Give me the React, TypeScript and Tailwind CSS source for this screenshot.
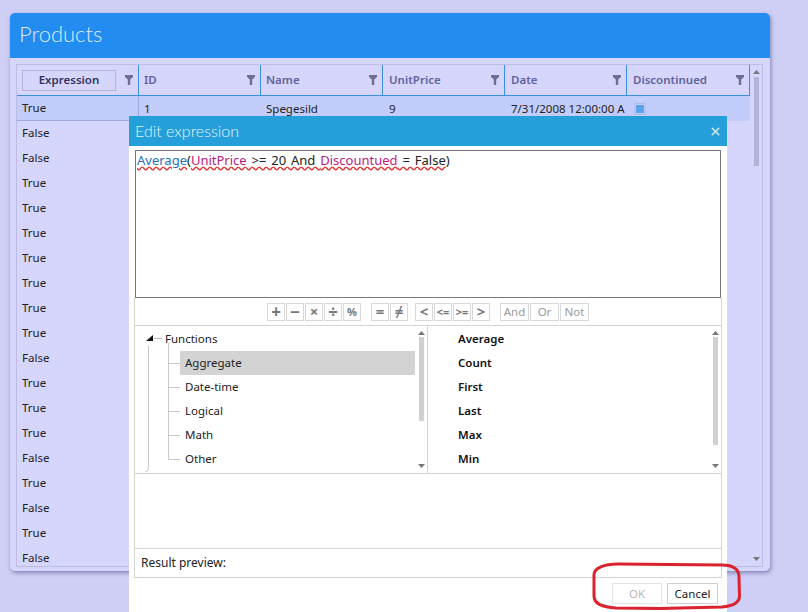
import React from 'react';
import {X} from "lucide-react";

const COLUMNS = ["ID", "Name", "UnitPrice", "Date", "Discontinued"];
const ROWS = ["False", "False", "True", "True", "True", "True", "True", "True", "True", "False", "True", "True", "True", "False", "True", "False", "True", "False"];
const TREE_ITEMS = ["Aggregate", "Date-time", "Logical", "Math", "Other"];
const FUNCTIONS = ["Average", "Count", "First", "Last", "Max", "Min"];

const FilterIcon = () => (
    <svg width="8" height="10" viewBox="0 0 8 10" className="shrink-0" aria-hidden="true">
        <path d="M0 0H8V2L5.2 4.500V10H2.800V4.500L0 2Z" fill="#6d6d95"/>
    </svg>
);

const HeaderCell = ({label, width, inset}: {label: string, width: string, inset: string}) => (
    <div className={`${width} ${inset} h-full flex items-center justify-between pr-[5px] border-r-[1px] border-[#3d8fe4] text-[11.5px] font-semibold text-[#62629c]`}>
        <span>{label}</span>
        <FilterIcon/>
    </div>
);

const Arrow = ({up}: {up?: boolean}) => (
    <svg width="7" height="4" viewBox="0 0 7 4" aria-hidden="true">
        <path d={up ? "M3.500 0L7 4H0Z" : "M0 0H7L3.500 4Z"} fill="#777"/>
    </svg>
);

const Scrollbar = ({thumb, thumbColor}: {thumb: string, thumbColor: string}) => (
    <div className="w-[12px] h-full flex flex-col items-center justify-between py-[5px]">
        <div className="flex flex-col items-center gap-[2px] flex-1 min-h-0">
            <Arrow up/>
            <div className={`w-[5px] ${thumb} ${thumbColor}`}/>
        </div>
        <Arrow/>
    </div>
);

const OpButton = ({children, width = "w-[18px]", text = "text-[15px] font-bold"}: {children: React.ReactNode, width?: string, text?: string}) => (
    <div className={`${width} h-[18px] border border-[#d8d8d8] flex items-center justify-center leading-none text-[#777] ${text}`}>
        {children}
    </div>
);

const App = () => {
    return (
        <div className="relative w-[808px] h-[612px] overflow-hidden bg-[#cfcff6] pl-[10px] pt-[13px] font-['Noto_Sans',sans-serif] text-[11.5px] text-[#222]">
            <div className="w-[760px] h-[558px] flex flex-col rounded-[5px] overflow-hidden bg-[#d6d6fc] shadow-[1px_2px_4px_rgba(70,70,130,0.55)]">
                <div className="h-[45px] shrink-0 bg-[#228cf0] pl-[9px] pb-[3px] flex items-center">
                    <span className="font-['Lato',sans-serif] font-light text-[22px] leading-none text-[#dbeafc]">Products</span>
                </div>

                <div className="ml-[6px] mt-[6px] w-[747px] h-[503px] flex border border-[#bcbce4]">
                    <div className="w-[734px] h-full flex flex-col overflow-hidden">
                        <div className="h-[31px] shrink-0 flex items-center border-b-[1px] border-[#3d8fe4]">
                            <div className="w-[122px] h-full flex items-center justify-between pl-[5px] pr-[5px] border-r-[1px] border-[#3d8fe4]">
                                <div className="w-[94px] h-[21px] border border-[#b4b4dc] flex items-center justify-center text-[11.5px] font-semibold text-[#33335f]">Expression</div>
                                <FilterIcon/>
                            </div>
                            <HeaderCell label={COLUMNS[0]} width="w-[122px]" inset="pl-[5px]"/>
                            <HeaderCell label={COLUMNS[1]} width="w-[122px]" inset="pl-[5px]"/>
                            <HeaderCell label={COLUMNS[2]} width="w-[122px]" inset="pl-[6px]"/>
                            <HeaderCell label={COLUMNS[3]} width="w-[122px]" inset="pl-[6px]"/>
                            <HeaderCell label={COLUMNS[4]} width="w-[123px]" inset="pl-[6px]"/>
                        </div>

                        <div className="h-[25px] shrink-0 flex items-center bg-[#c2cdfb]">
                            <div className="w-[122px] h-full flex items-center pl-[5px] border-r border-b border-[#9fa8e0]">True</div>
                            <div className="w-[122px] pl-[5px]">1</div>
                            <div className="w-[122px] pl-[5px]">Spegesild</div>
                            <div className="w-[122px] pl-[6px]">9</div>
                            <div className="w-[123px] pl-[6px] whitespace-nowrap">7/31/2008 12:00:00 A</div>
                            <div className="pl-[6px]">
                                <div className="w-[12px] h-[12px] border border-[#b4bdf0] flex items-center justify-center">
                                    <div className="w-[8px] h-[8px] bg-[#5aa4ea]"/>
                                </div>
                            </div>
                        </div>

                        {ROWS.map((value, index) => (
                            <div key={index} className="h-[25px] shrink-0 flex items-center pl-[5px] pb-[1px]">{value}</div>
                        ))}
                    </div>
                    <div className="w-[12px] h-full flex flex-col items-center justify-between py-[5px]">
                        <div className="flex flex-col items-center gap-[3px]">
                            <Arrow up/>
                            <div className="w-[5px] h-[89px] bg-[#b3b3da]"/>
                        </div>
                        <Arrow/>
                    </div>
                </div>
            </div>

            {/* Edit expression dialog, over the grid */}
            <div className="absolute left-[129px] top-[116px] w-[598px] h-[496px] flex flex-col bg-white">
                <div className="h-[30px] shrink-0 bg-[#259fd9] flex items-center justify-between pl-[6px] pr-[5px]">
                    <span className="font-['Lato',sans-serif] font-light text-[16px] text-[#e4f3fb]">Edit expression</span>
                    <X size={13} strokeWidth={3} className="text-[#cdeaf7]"/>
                </div>

                <div className="flex-1 flex flex-col px-[5px] pt-[4px]">
                    <div className="ml-[1px] w-[586px] h-[148px] shrink-0 border border-[#777] pl-[1px] text-[13px] leading-[18px] whitespace-nowrap [word-spacing:1.500px]">
                        <span className="text-[#2a6fb8] underline decoration-wavy decoration-[#e03030]">Average</span>
                        <span>(</span>
                        <span className="text-[#c01a80] underline decoration-wavy decoration-[#e03030]">UnitPrice</span>
                        <span className="underline decoration-wavy decoration-[#e03030]"> &gt;= 20 And </span>
                        <span className="text-[#c01a80] underline decoration-wavy decoration-[#e03030]">Discountued</span>
                        <span className="underline decoration-wavy decoration-[#e03030]"> = False</span>
                        <span>)</span>
                    </div>

                    <div className="flex-1 flex flex-col w-[588px] border-x border-b border-[#d4d4d4]">
                        <div className="h-[27px] shrink-0 flex items-center pl-[132px]">
                            <div className="flex gap-[1px]">
                                <OpButton text="text-[17px] font-bold">+</OpButton>
                                <OpButton text="text-[17px] font-bold">−</OpButton>
                                <OpButton>×</OpButton>
                                <OpButton text="text-[17px] font-bold">÷</OpButton>
                                <OpButton text="text-[11px] font-bold">%</OpButton>
                            </div>
                            <div className="flex gap-[1px] ml-[10px]">
                                <OpButton>=</OpButton>
                                <OpButton>≠</OpButton>
                            </div>
                            <div className="flex gap-[1px] ml-[7px]">
                                <OpButton>&lt;</OpButton>
                                <OpButton text="text-[11px] font-bold">&lt;=</OpButton>
                                <OpButton text="text-[11px] font-bold">&gt;=</OpButton>
                                <OpButton>&gt;</OpButton>
                            </div>
                            <div className="flex gap-[1px] ml-[10px]">
                                <OpButton width="w-[29px]" text="text-[11.5px] text-[#999]">And</OpButton>
                                <OpButton width="w-[29px]" text="text-[11.5px] text-[#999]">Or</OpButton>
                                <OpButton width="w-[29px]" text="text-[11.5px] text-[#999]">Not</OpButton>
                            </div>
                        </div>

                        <div className="h-[149px] shrink-0 flex border-y border-[#d4d4d4]">
                            <div className="relative w-[293px] h-full flex border-r border-[#d4d4d4]">
                                <div className="flex-1 pl-[9px] pt-[1px]">
                                    <div className="h-[24px] flex items-center">
                                        <svg width="21" height="24" viewBox="0 0 21 24" className="shrink-0" aria-hidden="true">
                                            <path d="M9 8V14H2Z" fill="#111"/>
                                            <path d="M10 11.500H18" stroke="#bbb"/>
                                        </svg>
                                        <span>Functions</span>
                                    </div>
                                    <div className="flex flex-col ml-[36px]">
                                        {TREE_ITEMS.map((item, index) => (
                                            <div key={item} className={`h-[24px] flex items-center pl-[5px] ${index === 0 ? "bg-[#d3d3d3] w-[235px]" : ""}`}>{item}</div>
                                        ))}
                                    </div>
                                </div>
                                {/* tree connector lines */}
                                <svg width="50" height="148" viewBox="0 0 50 148" className="absolute left-0 top-0 pointer-events-none" aria-hidden="true">
                                    <path d="M13.500 20V142Q13.500 146 10 146M33.500 17V133.500H45M33.500 37.500H45M33.500 61.500H45M33.500 85.500H45M33.500 109.500H45" fill="none" stroke="#c8c8c8"/>
                                </svg>
                                <Scrollbar thumb="h-[84px]" thumbColor="bg-[#d0d0d0]"/>
                            </div>
                            <div className="flex-1 flex h-full">
                                <div className="flex-1 pl-[30px] pt-[1px] font-semibold text-[#111]">
                                    {FUNCTIONS.map((name) => (
                                        <div key={name} className="h-[24px] flex items-center">{name}</div>
                                    ))}
                                </div>
                                <Scrollbar thumb="h-[108px]" thumbColor="bg-[#d0d0d0]"/>
                            </div>
                        </div>

                        <div className="h-[75px] shrink-0 border-b border-[#d4d4d4]"/>
                        <div className="flex-1 flex items-center pl-[6px] text-[12px]">Result preview:</div>
                    </div>

                    <div className="h-[34px] shrink-0 flex items-start justify-end gap-[5px] pt-[5px] pr-[4px]">
                        <div className="w-[50px] h-[21px] border border-[#e4e4e4] flex items-center justify-center text-[#b8b8b8]">OK</div>
                        <div className="w-[51px] h-[21px] border border-[#cfcfcf] flex items-center justify-center text-[#222]">Cancel</div>
                    </div>
                </div>
            </div>

            {/* red hand-drawn mark around the dialog buttons */}
            <svg width="808" height="612" viewBox="0 0 808 612" className="absolute left-0 top-0 pointer-events-none" aria-hidden="true">
                <path d="M594 575C594 568 604 564 618 564L722 565C733 565 739 569 739 577L739.500 596C739.500 603 733 606 722 607L660 608.500L616 608C602 607 594 604 594 596Z" fill="none" stroke="#d9232e" strokeWidth="3"/>
            </svg>
        </div>
    );
};

export default App;
